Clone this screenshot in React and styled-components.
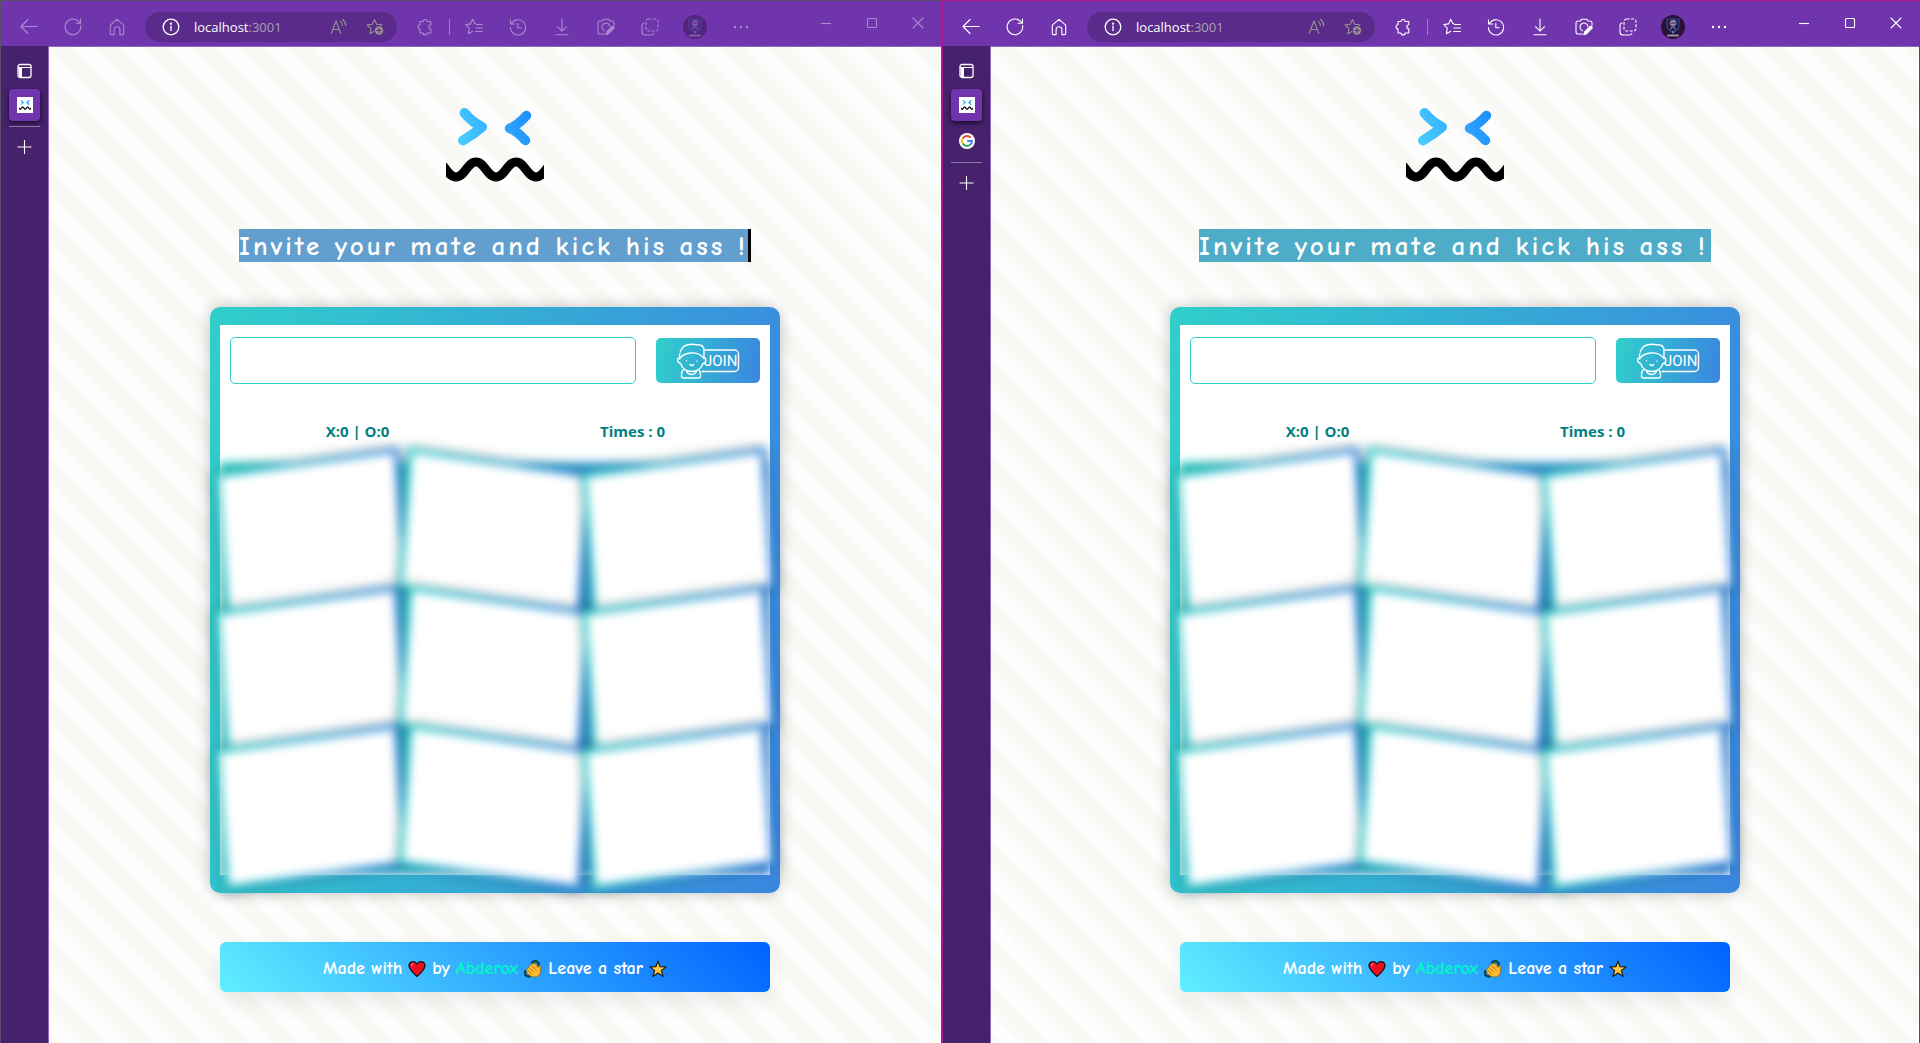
import React from "react";
import styled, { createGlobalStyle } from "styled-components";

const GlobalStyle = createGlobalStyle`
  * { box-sizing: border-box; }
  body { margin: 0; background: #46216c; }
  button, input { font: inherit; }
  button { border: 0; padding: 0; background: none; color: inherit; cursor: pointer; }
`;

const Desktop = styled.div`
  display: flex;
  min-height: 100vh;
  font-family: "Open Sans", "Noto Sans", sans-serif;
`;

const Window = styled.section`
  flex: ${(p) => p.$share} 1 0;
  min-width: 0;
  display: flex;
  flex-direction: column;
  border: 1px solid ${(p) => (p.$active ? "#a8198f" : "#5c5068")};
  border-bottom: 0;
`;

const Toolbar = styled.header`
  display: flex;
  align-items: center;
  height: 45px;
  padding: 7px 0 0 6px;
  background: #7034ac;
  color: #fff;
`;

const ToolButton = styled.button`
  width: ${(p) => (p.$wide ? 46 : 44)}px;
  height: 32px;
  display: grid;
  place-items: center;
  flex: none;
  opacity: ${(p) => (p.$dim ? 0.42 : 1)};
`;

const Divider = styled.span`
  width: 1px;
  height: 16px;
  margin: 0 2px;
  flex: none;
  background: #a27bca;
`;

const AddressBar = styled.div`
  flex: 1;
  min-width: 0;
  height: 30px;
  margin: 0 6px;
  padding: 0 4px 0 9px;
  display: flex;
  align-items: center;
  border-radius: 15px;
  background: #5a2b8a;
`;

const AddressButton = styled.button`
  width: ${(p) => (p.$site ? 34 : 36)}px;
  height: 30px;
  display: grid;
  place-items: center;
  flex: none;
  color: ${(p) => (p.$site ? "#fff" : "#96928f")};
`;

const Address = styled.button`
  flex: 1;
  min-width: 0;
  padding: 0 6px;
  text-align: left;
  font-size: 13px;
  line-height: 20px;
  color: #a9a0b3;
`;

const Host = styled.span`
  color: #fff;
`;

const WindowControls = styled.div`
  display: flex;
  margin: 0 0 8px 39px;
`;

const Body = styled.div`
  flex: 1;
  display: flex;
`;

const Sidebar = styled.nav`
  width: 47px;
  flex: none;
  display: flex;
  flex-direction: column;
  align-items: center;
  padding-top: 9px;
  background: #46216c;
  color: #fff;
`;

const TabList = styled.div`
  display: grid;
  gap: 4px;
  margin-top: 2px;
`;

const TabButton = styled.button`
  width: 31px;
  height: 32px;
  display: grid;
  place-items: center;
  border-radius: 4px;
  background: ${(p) => (p.$active ? "#7034ac" : "transparent")};
  box-shadow: ${(p) => (p.$active ? "0 2px 5px rgba(0, 0, 0, 0.65)" : "none")};
`;

const SidebarRule = styled.hr`
  width: 31px;
  height: 1px;
  margin: 5px 0 4px;
  border: 0;
  background: #9079a7;
`;

const Page = styled.main`
  flex: 1;
  min-width: 0;
  display: flex;
  flex-direction: column;
  align-items: center;
  padding: 61px 16px 51px;
  border-top: 1px solid #9166bd;
  border-left: 1px solid #9166bd;
  background: repeating-linear-gradient(
    45deg,
    #f8f9f5 0,
    #f9faf6 5px,
    #fefefe 11px,
    #fefefe 18px,
    #f9faf6 25px,
    #f8f9f5 34px
  );
`;

const Title = styled.h1`
  margin: 47px 0 45px;
  padding-top: 2px;
  font-family: "Comic Neue", "Comic Sans MS", Lato, sans-serif;
  font-size: 27px;
  font-weight: 700;
  line-height: 31px;
  letter-spacing: 3px;
  color: #fff;
  background: ${(p) => (p.$caret ? "#629fcf" : "#4facc8")};
  border-right: 3px solid ${(p) => (p.$caret ? "#000" : "#4facc8")};
`;

const Card = styled.div`
  width: 100%;
  max-width: 570px;
  padding: 18px 10px;
  border-radius: 10px;
  background: linear-gradient(98deg, #30cfcb, #3a86e0);
  box-shadow: 0 0 16px rgba(0, 0, 0, 0.24);
`;

const Game = styled.div`
  background: #fff;
`;

const JoinForm = styled.form`
  display: flex;
  align-items: center;
  gap: 20px;
  padding: 12px 10px;
`;

const NameInput = styled.input`
  flex: 1;
  min-width: 0;
  height: 47px;
  padding: 0 12px;
  border: 1px solid #30cfcb;
  border-radius: 5px;
  background: #fff;
`;

const JoinButton = styled.button`
  width: 104px;
  height: 45px;
  display: grid;
  place-items: center;
  border-radius: 5px;
  background: linear-gradient(98deg, #30cfcb, #3a86e0);
`;

const Scores = styled.div`
  display: grid;
  grid-template-columns: 1fr 1fr;
  padding: 23px 0 19px;
  text-align: center;
  font-size: 15px;
  font-weight: 700;
  line-height: 24px;
  color: #008080;
`;

const Board = styled.div`
  display: grid;
  grid-template-columns: repeat(3, 1fr);
  grid-template-rows: repeat(3, 138px);
  height: 413px;
  background: linear-gradient(98deg, #30cfcb, #3a86e0);
  filter: blur(5px);
`;

const Cell = styled.button`
  margin: -2px -1px;
  border: 5px solid transparent;
  background: linear-gradient(#fff, #fff) padding-box,
    linear-gradient(98deg, #30cfcb, #3a86e0) border-box;
  box-shadow: 0 0 10px rgba(0, 0, 0, 0.45);
  transform: ${(p) =>
    p.$mirrored ? "rotate(4deg) skewY(4deg)" : "rotate(-4deg) skewY(-4deg)"};
`;

const Footer = styled.footer`
  width: 100%;
  max-width: 550px;
  height: 50px;
  margin-top: 49px;
  padding-top: 4px;
  display: flex;
  align-items: center;
  justify-content: center;
  gap: 6px;
  border-radius: 6px;
  background: linear-gradient(45deg, #60efff, #0061ff);
  box-shadow: 0 8px 24px rgba(0, 0, 0, 0.08);
  font-family: "Comic Neue", "Comic Sans MS", Lato, sans-serif;
  font-size: 18px;
  font-weight: 700;
  line-height: 20px;
  color: #fff;
`;

const AuthorLink = styled.a`
  color: #00f7c4;
  text-decoration: none;
`;

const Svg = ({ size = 18, children, ...rest }) => (
  <svg
    width={size}
    height={size}
    viewBox="0 0 18 18"
    fill="none"
    stroke="currentColor"
    strokeWidth="1.1"
    strokeLinecap="round"
    strokeLinejoin="round"
    aria-hidden="true"
    {...rest}
  >
    {children}
  </svg>
);

const BackIcon = () => (
  <Svg><path d="M17 8.5H1.5M8 1.5l-7 7 7 7" /></Svg>
);
const ReloadIcon = () => (
  <Svg><path d="M16.6 7.5A7.8 7.8 0 1 1 13.8 2.8L16.3 5M16.5 1v4.3h-4.4" /></Svg>
);
const HomeIcon = () => (
  <Svg>
    <path d="M2.3 7.2 9 1.3l6.7 5.9v8.2a1.2 1.2 0 0 1-1.2 1.2h-2.6v-5a2.9 2.9 0 0 0-5.8 0v5H3.5a1.2 1.2 0 0 1-1.2-1.2z" />
  </Svg>
);
const InfoIcon = () => (
  <Svg strokeWidth="1.3">
    <circle cx="9" cy="9" r="7.8" />
    <path d="M9 8.2v4.3" />
    <circle cx="9" cy="5.7" r=".5" fill="currentColor" />
  </Svg>
);
const ReadAloudIcon = () => (
  <Svg>
    <path d="M1.2 15.500 6 3l4.800 12.500M2.700 11.500h6.600M10.500 3.300a6 6 0 0 1 2 4.500M12.500 1.300a9 9 0 0 1 3.300 6.500" />
  </Svg>
);
const STAR = "M8.5 1.5l2.2 4.8 5.2.6-3.900 3.600 1 5.200-4.500-2.600L4 15.700l1-5.200L1.100 6.900l5.200-.6z";
const AddFavoriteIcon = () => (
  <Svg>
    <path d={STAR} />
    <circle cx="13" cy="12.5" r="5" fill="#5a2b8a" stroke="none" />
    <circle cx="13" cy="12.5" r="4.2" fill="currentColor" stroke="none" />
    <path d="M13 10.300v4.400M10.800 12.500h4.400" stroke="#5a2b8a" />
  </Svg>
);
const PuzzleIcon = () => (
  <Svg>
    <path d="M4 3.500h3.100a2 2 0 0 1 4 0h3.700v3.300a2 2 0 1 0 0 4v4.200h-3.700a2 2 0 0 1-4 0H4v-4.200a2 2 0 1 1 0-4z" />
  </Svg>
);
const FavoritesIcon = () => (
  <Svg>
    <path d="M11 5.800 9.800 5.600 7.700 1.300 5.500 5.900.8 6.600l3.500 3.500-.9 5.600 4.300-2.400M11.500 6.500h6M11 10h6.500M10.500 13.500h7" />
  </Svg>
);
const HistoryIcon = () => (
  <Svg><path d="M2.200 6A7.600 7.600 0 1 1 1.400 9.600M1.500 1.800V6h4.300M8.800 5.500v4.200h3.200" /></Svg>
);
const DownloadIcon = () => (
  <Svg><path d="M9 1v12M4.500 8.700 9 13.200l4.500-4.500M3 16.700h12" /></Svg>
);
const CameraIcon = () => (
  <Svg>
    <path d="M8 16H3a2 2 0 0 1-2-2V5a2 2 0 0 1 2-2h2.500l1-1.700h5.400L12.900 3H15a2 2 0 0 1 2 2v2" />
    <path d="M7.500 12.800A4 4 0 1 1 12.900 8.300" />
    <path d="M9 16.800l.7-3 5.600-5.600q1.800-.2 1.900 1.600l-5.700 6z" fill="currentColor" />
  </Svg>
);
const CollectionsIcon = () => (
  <Svg strokeLinecap="butt">
    <rect x="5" y="1" width="12" height="12" rx="2.5" strokeDasharray="3 1.500" />
    <path d="M3.500 5A2.500 2.500 0 0 0 1 7.500V14a3 3 0 0 0 3 3h6.500a2.500 2.500 0 0 0 2.500-2" />
  </Svg>
);
const AvatarIcon = () => (
  <Svg size={24} viewBox="0 0 24 24" strokeWidth="1.2">
    <circle cx="12" cy="12" r="12" fill="#2b1038" stroke="none" />
    <path d="M6 4h12v7c0 3-3 5-6 6.500C9 16 6 14 6 11z" stroke="#2b4a91" fill="#211746" />
    <circle cx="12" cy="8" r="3" fill="#a59aae" stroke="#6d6183" />
    <path d="M10.500 8h3" stroke="#2b1038" />
    <path d="M9.500 14l2.500-2.500 2.500 2.500" stroke="#7b7190" />
    <path d="M12 16v2" stroke="#5fa8d8" />
    <path d="M7 20.500h10" stroke="#9b90a6" strokeWidth="2" />
  </Svg>
);
const MoreIcon = () => (
  <Svg>
    <path d="M3 9h.01M9 9h.01M15 9h.01" strokeWidth="2.400" />
  </Svg>
);
const MinimizeIcon = () => (
  <Svg strokeLinecap="butt"><path d="M4 9.500h10" /></Svg>
);
const MaximizeIcon = () => (
  <Svg><rect x="4.500" y="4.500" width="9" height="9" rx="1" /></Svg>
);
const CloseIcon = () => (
  <Svg><path d="M4 4l10 10M14 4 4 14" /></Svg>
);
const TabPanelIcon = () => (
  <Svg>
    <rect x="2" y="2.500" width="13" height="13" rx="2" strokeWidth="1.300" />
    <path d="M2.500 5.500h12.500" />
    <path d="M2.500 5.500h3.500v9.800H3z" fill="currentColor" stroke="none" />
  </Svg>
);
const PlusIcon = () => (
  <Svg strokeLinecap="butt"><path d="M8.500 2v14M1.500 9h14" /></Svg>
);
const GoogleIcon = () => (
  <svg width="16" height="16" viewBox="0 0 16 16" fill="none" strokeWidth="2" aria-hidden="true">
    <circle cx="8" cy="8" r="8" fill="#fff" />
    <path d="M11.700 4.600A5 5 0 0 0 3.700 5.500" stroke="#ea4335" />
    <path d="M3.700 5.500a5 5 0 0 0 0 5" stroke="#fbbc05" />
    <path d="M3.700 10.500a5 5 0 0 0 7.500 1.300" stroke="#34a853" />
    <path d="M11.200 11.800A5 5 0 0 0 13 8H8.200" stroke="#4285f4" />
  </svg>
);

const Face = () => (
  <>
    <g fill="none" strokeLinecap="round" strokeLinejoin="round" stroke="url(#eyes)">
      <path d="M18.500 5Q26 14 36 19Q28 26 17 32.500" strokeWidth="10" />
      <path d="M80.500 7.500Q72 17 63.500 20.500Q70 22 79.500 32.500" strokeWidth="9.500" />
    </g>
    <path
      d="M-10 54C-1 54 1 69 10 69S21 54 30 54S41 69 50 69S61 54 70 54S81 69 90 69S101 54 110 54"
      fill="none"
      stroke="#000"
      strokeWidth="9"
    />
  </>
);

const Logo = () => (
  <svg width="98" height="74" viewBox="0 0 98 74" role="img" aria-label="Squinting face">
    <defs>
      <linearGradient id="eyes" gradientUnits="userSpaceOnUse" x1="12" y1="38" x2="84" y2="4">
        <stop offset="0" stopColor="#4bd0ff" />
        <stop offset="1" stopColor="#1e8cff" />
      </linearGradient>
    </defs>
    <Face />
  </svg>
);

const FaviconIcon = () => (
  <svg width="16" height="16" viewBox="-16 -20 130 116" preserveAspectRatio="none" aria-hidden="true">
    <rect x="-16" y="-20" width="130" height="116" fill="#fff" />
    <svg x="0" y="0" width="98" height="74" viewBox="0 0 98 74"><Face /></svg>
  </svg>
);

const JoinIcon = () => (
  <svg
    width="64"
    height="36"
    viewBox="0 0 64 36"
    fill="none"
    stroke="#fff"
    strokeWidth="1.4"
    strokeLinecap="round"
    strokeLinejoin="round"
  >
    <path d="M29 7h29.500a4 4 0 0 1 4 4v13.500a4 4 0 0 1-4 4H26" />
    <path d="M3.500 14C3.500 7 7 2 13.500 1.500 17 .5 19 2 22 1.800c4 0 6 2.200 6 5.700V14" strokeDasharray="3 2 60" />
    <path d="M3.500 16C8 8.500 22 7.500 28 15.500" />
    <path d="M4 15c-3.500-.5-3 5 .5 5.500C6.500 26 11 28.500 15.500 28.500S25 26 27 20.500c3.500-.5 4-6 1-5.500" />
    <path d="M7.500 26.500C5.500 28 5.500 31 5.500 33a2 2 0 0 0 2 2h15a2 2 0 0 0 2-2c0-2 0-5-2-6.500M10.500 28.500c2 4 8 4 10 0" />
    <path d="M14 21.500q1.800 2 3.600 0M10.500 18h.01M21 18h.01" />
    <text x="28" y="23" fill="#fff" stroke="none" fontFamily="Roboto, sans-serif" fontSize="15">
      JOIN
    </text>
  </svg>
);

const HeartIcon = () => (
  <svg width="18" height="18" viewBox="0 0 18 18" role="img" aria-label="love">
    <path d="M9 16.500C5 13 1 9.500 1 5.600 1 1.500 6.500.2 9 4c2.500-3.800 8-2.500 8 1.600 0 3.900-4 7.400-8 10.900z" fill="#e81224" stroke="#111" strokeWidth="1.300" />
    <path d="M3.500 6q0-2 1.800-2.500" stroke="#ff8a80" strokeWidth="1.200" fill="none" />
  </svg>
);
const WaveIcon = () => (
  <svg width="18" height="18" viewBox="0 0 18 18" fill="none" strokeLinecap="round" role="img" aria-label="waving hand">
    <path d="M8 2.600q2.500-2.400 5-.9t1.500 3.500M1.500 11q-1.200 2.500.2 4.200t3.800 1.300" stroke="#0f4350" strokeWidth="2.400" />
    <path d="M3 9 7.500 3.800q1-.6 1.700.2l1.200-.8 1.400 1.500 1.200.2 1.200 2.600 1-2.300q1.600.2 1.600 2.500L16.500 12c-.5 3-2.500 5-5.500 5S5.500 16 3.500 13.500L2.300 11z" fill="#ffb92e" stroke="#7c5a17" strokeWidth=".7" />
    <path d="M5.500 8l4 4M8 6l4 4M4 10.500l3.500 3.500" stroke="#8a6418" strokeWidth=".7" />
  </svg>
);
const StarIcon = () => (
  <svg width="18" height="18" viewBox="0 0 18 18" role="img" aria-label="star">
    <path d="M9 1l2.100 5.700 6 .2-4.700 3.700 1.700 5.900L9 13.100l-5.100 3.400 1.700-5.900L.9 6.900l6-.2z" fill="#ffc83d" stroke="#1a1a1a" strokeWidth="1.200" strokeLinejoin="round" />
  </svg>
);

const PAGE_TOOLS = [
  ["Favorites", FavoritesIcon],
  ["History", HistoryIcon],
  ["Downloads", DownloadIcon],
  ["Screenshot", CameraIcon],
  ["Collections", CollectionsIcon],
];

function Browser({ share, active, tabs }) {
  const dim = !active;
  const tool = (label, Icon, wide) => (
    <ToolButton key={label} type="button" aria-label={label} $dim={dim} $wide={wide}>
      <Icon />
    </ToolButton>
  );
  return (
    <Window $share={share} $active={active}>
      <Toolbar>
        {tool("Back", BackIcon)}
        {tool("Reload", ReloadIcon)}
        {tool("Home", HomeIcon)}
        <AddressBar>
          <AddressButton type="button" aria-label="Site information" $site>
            <InfoIcon />
          </AddressButton>
          <Address type="button">
            <Host>localhost</Host>:3001
          </Address>
          <AddressButton type="button" aria-label="Read aloud"><ReadAloudIcon /></AddressButton>
          <AddressButton type="button" aria-label="Add to favorites"><AddFavoriteIcon /></AddressButton>
        </AddressBar>
        {tool("Extensions", PuzzleIcon)}
        <Divider />
        {PAGE_TOOLS.map(([label, Icon]) => tool(label, Icon))}
        {tool("Profile", AvatarIcon, true)}
        {tool("More", MoreIcon, true)}
        <WindowControls>
          {tool("Minimize", MinimizeIcon, true)}
          {tool("Maximize", MaximizeIcon, true)}
          {tool("Close", CloseIcon, true)}
        </WindowControls>
      </Toolbar>
      <Body>
        <Sidebar aria-label="Tabs">
          <TabButton type="button" aria-label="Tab actions"><TabPanelIcon /></TabButton>
          <TabList>
            {tabs.map(([label, Icon], i) => (
              <TabButton key={label} type="button" aria-label={label} $active={i === 0}>
                <Icon />
              </TabButton>
            ))}
          </TabList>
          <SidebarRule />
          <TabButton type="button" aria-label="New tab"><PlusIcon /></TabButton>
        </Sidebar>
        <Page>
          <Logo />
          <Title $caret={!active}>Invite your mate and kick his ass !</Title>
          <Card>
            <Game>
              <JoinForm onSubmit={(e) => e.preventDefault()}>
                <NameInput type="text" aria-label="Mate's id" />
                <JoinButton type="submit" aria-label="Join"><JoinIcon /></JoinButton>
              </JoinForm>
              <Scores>
                <span>X:0 | O:0</span>
                <span>Times : 0</span>
              </Scores>
              <Board>
                {Array.from({ length: 9 }, (_, i) => (
                  <Cell key={i} type="button" aria-label={`Cell ${i + 1}`} $mirrored={i % 3 === 1} />
                ))}
              </Board>
            </Game>
          </Card>
          <Footer>
            <span>Made with</span>
            <HeartIcon />
            <span>by</span>
            <AuthorLink href="#abderox">Abderox</AuthorLink>
            <WaveIcon />
            <span>Leave a star</span>
            <StarIcon />
          </Footer>
        </Page>
      </Body>
    </Window>
  );
}

export default function App() {
  return (
    <>
      <GlobalStyle />
      <Desktop>
        <Browser share={942} tabs={[["Tic tac toe", FaviconIcon]]} />
        <Browser share={978} active tabs={[["Tic tac toe", FaviconIcon], ["Google", GoogleIcon]]} />
      </Desktop>
    </>
  );
}
